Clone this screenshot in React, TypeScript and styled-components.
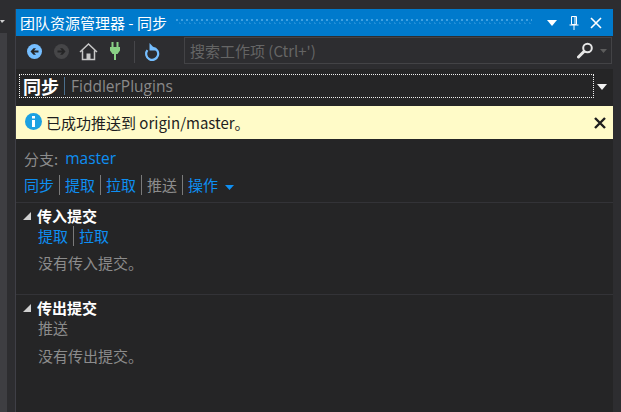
import React from 'react';
import styled, { createGlobalStyle } from 'styled-components';

const GlobalStyle = createGlobalStyle`
    html, body {
        margin: 0;
        padding: 0;
        background: #2d2d30;
    }
    body {
        width: 621px;
        height: 412px;
        overflow: hidden;
        font-family: "Noto Sans CJK SC", "Open Sans", sans-serif;
    }
`;

const Page = styled.div`
    display: flex;
    width: 621px;
    height: 412px;
    background: #2d2d30;
`;
const Gutter = styled.div`
    width: 15px;
    flex: none;
    display: flex;
    flex-direction: column;
`;
const GutterArrow = styled.div`
    height: 33px;
    padding-top: 19px;
    box-sizing: border-box;
    > svg {
        display: block;
    }
`;
const GutterStrip = styled.div`
    width: 7px;
    flex: 1;
    background: #3e3e42;
`;
const ToolWindow = styled.div`
    width: 598px;
    margin-top: 9px;
    display: flex;
    flex-direction: column;
    background: #252526;
    border-left: 1px solid #3f3f46;
    box-sizing: border-box;
`;
const TitleBar = styled.div`
    height: 27px;
    flex: none;
    display: flex;
    align-items: center;
    background: #007acc;
    color: #fff;
    font-size: 15px;
    padding-left: 4px;
    padding-right: 6px;
`;
const TitleText = styled.span`
    white-space: nowrap;
    line-height: 27px;
`;
const Grip = styled.div`
    flex: 1;
    height: 7px;
    margin: 0 9px 0 9px;
    background-image:
        radial-gradient(circle at 1px 1px, #3f9fe0 1px, transparent 1px),
        radial-gradient(circle at 3.5px 4.5px, #1f8cd6 1px, transparent 1px);
    background-size: 5px 7px;
`;
const TitleButton = styled.button`
    width: 22px;
    height: 18px;
    padding: 0;
    border: 0;
    background: none;
    display: flex;
    align-items: center;
    justify-content: center;
`;
const Toolbar = styled.div`
    height: 33px;
    flex: none;
    display: flex;
    align-items: flex-start;
    background: #2d2d30;
    padding: 1px 1px 0 5px;
    box-sizing: border-box;
`;
const ToolIcon = styled.span`
    width: 27px;
    height: 29px;
    flex: none;
    display: flex;
    align-items: center;
    justify-content: center;
`;
const ToolDivider = styled.span`
    width: 1px;
    height: 22px;
    margin: 4px 4px 0 5px;
    background: #46464a;
`;
const SearchBox = styled.div`
    flex: 1;
    height: 27px;
    margin-left: 18px;
    display: flex;
    align-items: center;
    justify-content: space-between;
    border: 1px solid #434346;
    background: #2d2d30;
    box-sizing: border-box;
    padding: 0 4px 0 5px;
    color: #656565;
    font-size: 15px;
`;
const SearchIcons = styled.span`
    display: flex;
    align-items: center;
    gap: 6px;
`;
const HeaderRow = styled.div`
    height: 37px;
    flex: none;
    display: flex;
    align-items: flex-start;
    padding: 5px 0 0 3px;
    box-sizing: border-box;
`;
const PageSelector = styled.div`
    width: 575px;
    height: 24px;
    box-sizing: border-box;
    border: 1px dotted #f1f1f1;
    display: flex;
    align-items: center;
    padding-left: 3px;
`;
const PageName = styled.span`
    color: #fff;
    font-size: 18px;
    font-weight: 700;
`;
const RepoName = styled.span`
    color: #8a8a8a;
    font-size: 15.5px;
    border-left: 1px solid #4b6f8c;
    margin-left: 5px;
    padding-left: 6px;
    line-height: 18px;
    font-family: "Open Sans", sans-serif;
`;
const SelectorCaret = styled.span`
    display: block;
    height: 6px;
    margin: 10px 0 0 3px;
    > svg {
        display: block;
    }
`;
const Notice = styled.div`
    height: 33px;
    flex: none;
    display: flex;
    align-items: center;
    background: #fffbc8;
    color: #1e1e1e;
    font-size: 15px;
    padding: 0 7px 0 9px;
    box-sizing: border-box;
`;
const NoticeIcon = styled.svg`
    margin-bottom: 2px;
`;
const NoticeText = styled.span`
    flex: 1;
    margin-left: 4px;
`;
const BranchRow = styled.div`
    display: flex;
    align-items: center;
    height: 20px;
    margin-top: 9px;
    padding-left: 8px;
    color: #8c8c8c;
    font-size: 15px;
    flex: none;
`;
const BranchName = styled.span`
    color: #0e8ff2;
    margin-left: 7px;
    font-size: 15.5px;
    font-family: "Open Sans", sans-serif;
`;
const Links = styled.div<{ $indent: number }>`
    display: flex;
    align-items: center;
    height: 20px;
    flex: none;
    padding-left: ${(props) => props.$indent}px;
`;
const Action = styled.span<{ $disabled?: boolean }>`
    font-size: 15px;
    line-height: 20px;
    color: ${(props) => (props.$disabled ? '#8c8c8c' : '#0e8ff2')};
    padding: 0 5px;
    border-left: 1px solid #7a7a7a;
    &:first-child {
        border-left: 0;
        padding-left: 0;
    }
`;
const ActionRow = styled(Links)`
    margin: 7px 0;
`;
const Caret = styled.svg`
    margin-left: 7px;
    margin-bottom: 1px;
`;
const Section = styled.section`
    border-top: 1px solid #333337;
    flex: none;
    padding-left: 7px;
`;
const SectionHeader = styled.div`
    display: flex;
    align-items: center;
    height: 17px;
    margin-top: 4px;
    margin-bottom: 2px;
    color: #fff;
    font-size: 15px;
    font-weight: 700;
    gap: 6px;
`;
const SectionBody = styled.div`
    padding-left: 15px;
    display: flex;
    flex-direction: column;
`;
const Muted = styled.div`
    color: #8c8c8c;
    font-size: 15px;
    line-height: 20px;
`;
const EmptyMessage = styled(Muted)<{ $gap: number }>`
    margin-top: ${(props) => props.$gap}px;
    margin-bottom: 21px;
`;

function App() {
    return (
        <Page>
            <GlobalStyle />
            <Gutter>
                <GutterArrow>
                    <svg width="5" height="4" viewBox="0 0 5 4"><path d="M0 1h5L2 4z" fill="#d0d0d0" /></svg>
                </GutterArrow>
                <GutterStrip />
            </Gutter>
            <ToolWindow>
                <TitleBar>
                    <TitleText>团队资源管理器 - 同步</TitleText>
                    <Grip />
                    <TitleButton>
                        <svg width="10" height="6" viewBox="0 0 10 6"><path d="M0 0h10L5 6z" fill="#fff" /></svg>
                    </TitleButton>
                    <TitleButton>
                        <svg width="10" height="14" viewBox="0 0 10 14" fill="none" stroke="#fff">
                            <path d="M2.500 .5h5v8h-5zM6 1v7M.5 9h9M5 9v5" />
                        </svg>
                    </TitleButton>
                    <TitleButton>
                        <svg width="12" height="12" viewBox="0 0 12 12" stroke="#fff" strokeWidth="1.600"><path d="M1 1l10 10M11 1L1 11" /></svg>
                    </TitleButton>
                </TitleBar>
                <Toolbar>
                    <ToolIcon>
                        <svg width="15" height="15" viewBox="0 0 15 15">
                            <circle cx="7.500" cy="7.500" r="7.500" fill="#75beff" />
                            <path d="M11.500 6.500v2H7l2 2.200H6.500L3.500 7.500l3-3.200H9l-2 2.200z" fill="#252526" />
                        </svg>
                    </ToolIcon>
                    <ToolIcon>
                        <svg width="15" height="15" viewBox="0 0 15 15">
                            <circle cx="7.500" cy="7.500" r="7.500" fill="#464648" />
                            <path d="M3.500 6.500v2H8l-2 2.200h2.500l3-3.200-3-3.200H6l2 2.200z" fill="#252526" />
                        </svg>
                    </ToolIcon>
                    <ToolIcon>
                        <svg width="19" height="19" viewBox="0 0 19 19" fill="none" stroke="#c8c8c8" strokeWidth="1.500">
                            <path d="M1 10 9.500 2 18 10M3.500 8.500v9h12v-9" />
                            <rect x="7.500" y="11.500" width="4" height="6" fill="#c8c8c8" stroke="none" />
                        </svg>
                    </ToolIcon>
                    <ToolIcon>
                        <svg width="11" height="19" viewBox="0 0 11 19" fill="#89d185">
                            <path d="M1.500 0h2v5h-2zM6.500 0h2v5h-2zM0 5h10v3.500L7.500 12H6v6H4v-6H2.500L0 8.500z" />
                        </svg>
                    </ToolIcon>
                    <ToolDivider />
                    <ToolIcon>
                        <svg width="17" height="19" viewBox="0 0 17 19" fill="none" stroke="#75beff" strokeWidth="2.200">
                            <path d="M9 5.900A6 6 0 1 1 3.400 8.200" />
                            <path d="M5.500 1v7.500h7z" fill="#75beff" stroke="none" />
                        </svg>
                    </ToolIcon>
                    <SearchBox>
                        <span>搜索工作项 (Ctrl+')</span>
                        <SearchIcons>
                            <svg width="17" height="17" viewBox="0 0 17 17" fill="none" stroke="#e6e6e6">
                                <circle cx="10.500" cy="6" r="4.300" strokeWidth="2" />
                                <path d="M7 9.500 1.500 15" strokeWidth="3" strokeLinecap="round" />
                            </svg>
                            <svg width="7" height="4" viewBox="0 0 7 4"><path d="M0 0h7L3.500 4z" fill="#5c5c5c" /></svg>
                        </SearchIcons>
                    </SearchBox>
                </Toolbar>
                <HeaderRow>
                    <PageSelector>
                        <PageName>同步</PageName>
                        <RepoName>FiddlerPlugins</RepoName>
                    </PageSelector>
                    <SelectorCaret>
                        <svg width="10" height="6" viewBox="0 0 10 6"><path d="M0 0h10L5 6z" fill="#f1f1f1" /></svg>
                    </SelectorCaret>
                </HeaderRow>
                <Notice>
                    <NoticeIcon width="17" height="17" viewBox="0 0 17 17">
                        <circle cx="8.500" cy="8.500" r="8.500" fill="#1ba1e2" />
                        <rect x="7" y="3" width="3" height="2.500" fill="#fff" />
                        <rect x="7" y="7" width="3" height="7" fill="#fff" />
                    </NoticeIcon>
                    <NoticeText>已成功推送到 origin/master。</NoticeText>
                    <svg width="12" height="12" viewBox="0 0 12 12" stroke="#1e1e1e" strokeWidth="2.400"><path d="M1 1l10 10M11 1L1 11" /></svg>
                </Notice>
                <BranchRow>分支:<BranchName>master</BranchName></BranchRow>
                <ActionRow $indent={8}>
                    <Action>同步</Action>
                    <Action>提取</Action>
                    <Action>拉取</Action>
                    <Action $disabled>推送</Action>
                    <Action>操作
                        <Caret width="9" height="5" viewBox="0 0 9 5"><path d="M0 0h9L4.500 5z" fill="#0e8ff2" /></Caret>
                    </Action>
                </ActionRow>
                <Section>
                    <SectionHeader>
                        <svg width="8" height="8" viewBox="0 0 8 8"><path d="M8 0v8H0z" fill="#d0d0d0" /></svg>
                        <span>传入提交</span>
                    </SectionHeader>
                    <SectionBody>
                        <Links $indent={0}>
                            <Action>提取</Action>
                            <Action>拉取</Action>
                        </Links>
                        <EmptyMessage $gap={7}>没有传入提交。</EmptyMessage>
                    </SectionBody>
                </Section>
                <Section>
                    <SectionHeader>
                        <svg width="8" height="8" viewBox="0 0 8 8"><path d="M8 0v8H0z" fill="#d0d0d0" /></svg>
                        <span>传出提交</span>
                    </SectionHeader>
                    <SectionBody>
                        <Muted>推送</Muted>
                        <EmptyMessage $gap={8}>没有传出提交。</EmptyMessage>
                    </SectionBody>
                </Section>
            </ToolWindow>
        </Page>
    );
}

export default App;
